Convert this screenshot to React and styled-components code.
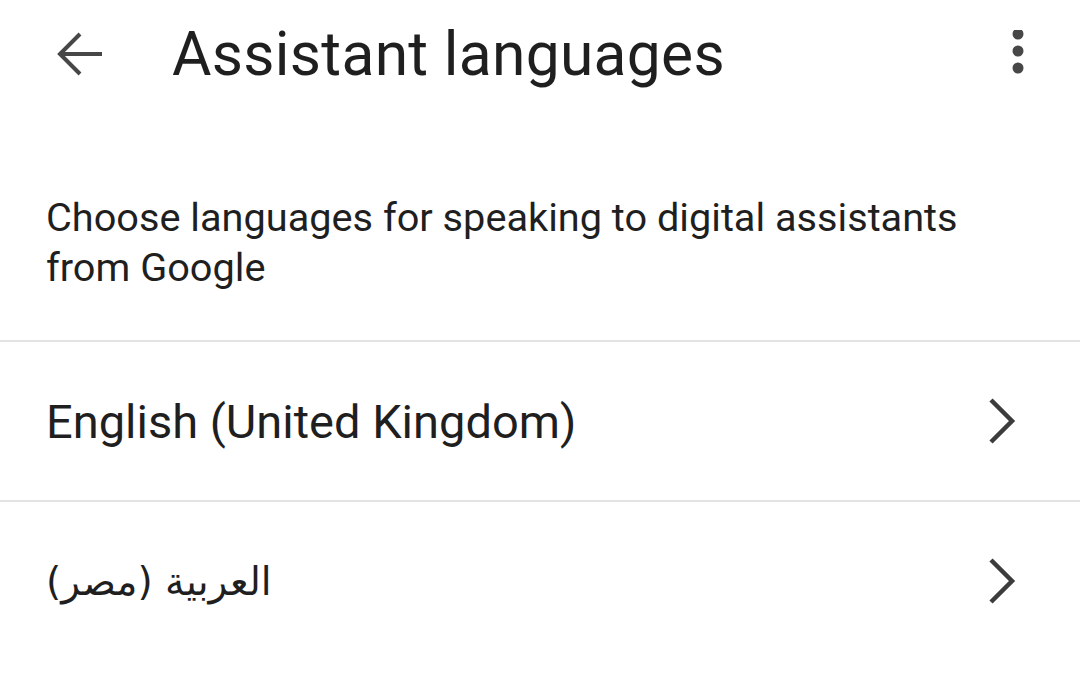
import React from 'react';
import styled, { createGlobalStyle } from 'styled-components';

const GlobalStyle = createGlobalStyle`
  html, body {
    margin: 0;
    padding: 0;
    background: #ffffff;
  }
  body {
    font-family: Roboto, "DejaVu Sans", sans-serif;
    color: #1f1f1f;
  }
`;

const Screen = styled.div`
  width: 1080px;
  height: 680px;
  overflow: hidden;
  background: #ffffff;
`;

const TopBar = styled.div`
  display: flex;
  align-items: center;
  height: 108px;
  padding: 0 52px 0 52px;
`;

const IconButton = styled.div`
  display: flex;
  align-items: center;
  justify-content: center;
  width: ${(p) => p.size || 56}px;
  height: 56px;
  color: #474747;
`;

const Title = styled.h1`
  flex: 1;
  margin: 0 0 0 64px;
  font-size: 60.5px;
  font-weight: 400;
  letter-spacing: 0.3px;
  color: #1f1f1f;
`;

const Description = styled.p`
  margin: 0;
  padding: 85px 46px 47px;
  font-size: 39.7px;
  line-height: 50px;
  color: #1f1f1f;
  border-bottom: 2px solid #e3e3e3;
`;

const LanguageRow = styled.div`
  display: flex;
  align-items: center;
  justify-content: space-between;
  height: 158px;
  padding: 0 64px 0 46px;
  border-bottom: ${(p) => (p.last ? 'none' : '2px solid #e3e3e3')};
`;

const LanguageName = styled.span`
  font-size: ${(p) => (p.arabic ? 39 : 47)}px;
  font-family: ${(p) => (p.arabic ? '"DejaVu Sans", sans-serif' : 'Roboto, sans-serif')};
  color: #1f1f1f;
`;

const BackIcon = () => (
  <svg width="50" height="50" viewBox="0 0 50 50" fill="none">
    <path d="M47 25H6M25 5L5 25l20 20" stroke="currentColor" strokeWidth="4" />
  </svg>
);

const MoreIcon = () => (
  <svg width="14" height="48" viewBox="0 0 14 48">
    <circle cx="7" cy="4" r="5.5" fill="currentColor" />
    <circle cx="7" cy="21" r="5.5" fill="currentColor" />
    <circle cx="7" cy="38" r="5.5" fill="currentColor" />
  </svg>
);

const Chevron = () => (
  <svg width="30" height="48" viewBox="0 0 30 48" fill="none">
    <path d="M5 3l21 21L5 45" stroke="#3c3c3c" strokeWidth="4.5" />
  </svg>
);

const languages = [
  { name: 'English (United Kingdom)' },
  { name: 'العربية (مصر)', arabic: true },
];

export default function App() {
  return (
    <Screen>
      <GlobalStyle />
      <TopBar>
        <IconButton size={56}>
          <BackIcon />
        </IconButton>
        <Title>Assistant languages</Title>
        <IconButton size={20}>
          <MoreIcon />
        </IconButton>
      </TopBar>
      <Description>
        Choose languages for speaking to digital assistants
        <br />
        from Google
      </Description>
      {languages.map((lang, i) => (
        <LanguageRow key={lang.name} last={i === languages.length - 1}>
          <LanguageName arabic={lang.arabic} dir={lang.arabic ? 'rtl' : 'ltr'}>
            {lang.name}
          </LanguageName>
          <Chevron />
        </LanguageRow>
      ))}
    </Screen>
  );
}
